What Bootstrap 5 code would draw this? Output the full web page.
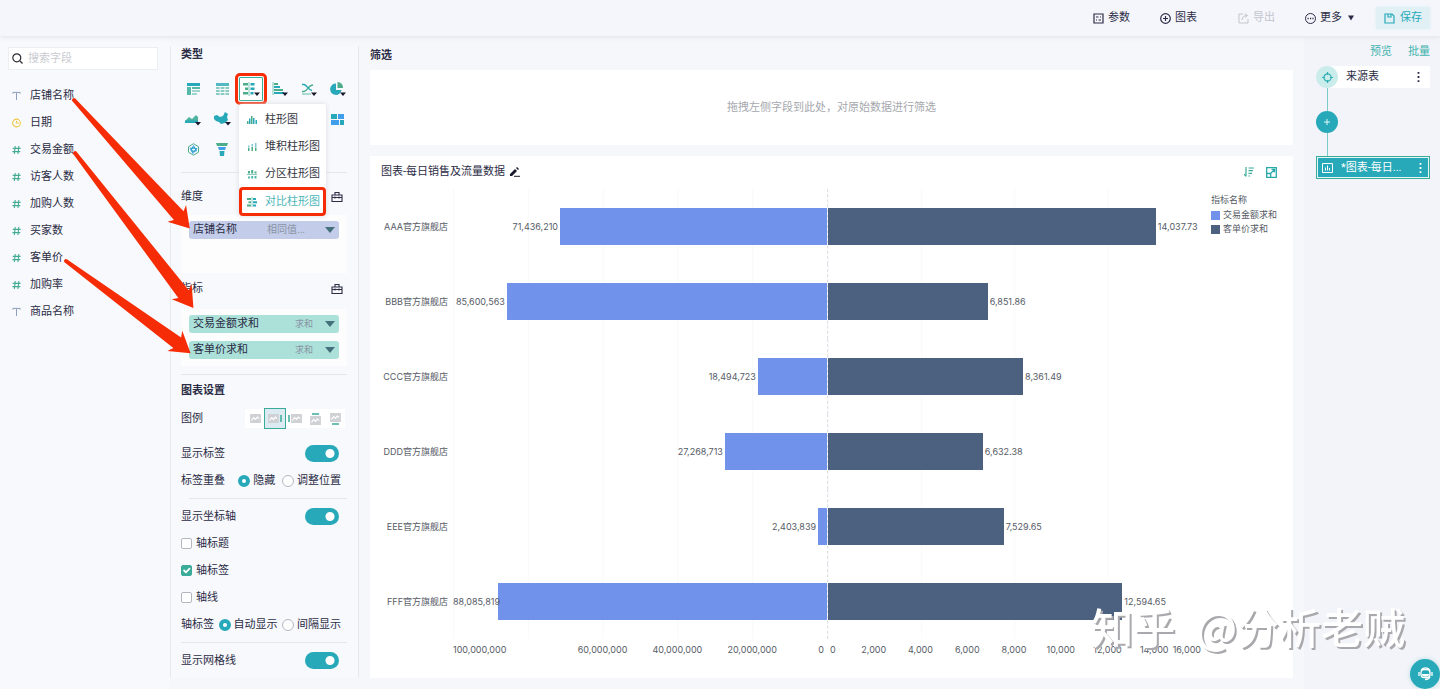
<!DOCTYPE html>
<html lang="zh-CN">
<head>
<meta charset="utf-8">
<meta name="viewport" content="width=device-width, initial-scale=1">
<title>图表-每日销售及流量数据</title>
<link href="https://cdn.jsdelivr.net/npm/bootstrap@5.3.0/dist/css/bootstrap.min.css" rel="stylesheet">
<style>
:root{--teal:#27a9b9;--green:#3bab9a;--ink:#2b2c45;--red:#f62c06}
body{font-family:Roboto,"Noto Sans CJK SC",sans-serif;font-size:11px;line-height:16px;color:var(--ink);background:#f6f7fa;overflow-x:hidden}
svg{display:block;flex:none}
button{font-size:11px;line-height:16px;color:inherit;background:none;border:0;padding:0}
a{text-decoration:none}
.topbar{height:36px;background:#f5f6fc;box-shadow:0 1px 5px #dfe1e8;padding-right:10px;position:relative}
.tool{display:flex;align-items:center;gap:4px}
.save{background:#e0f0f5;color:var(--teal);padding:3px 8px;gap:5px;box-shadow:0 0 4px #e0f0f5;margin-left:22px}
.fields{width:170px;padding:11px 12px 0 8px;background:#f7f9fc}
.searchbox{background:#fff;border:1px solid #eceef2;height:23px;padding:0 3px;gap:5px}
.searchbox input{font-size:11px;border:0;outline:0;background:none;min-width:0;padding:0}
.searchbox input::placeholder{color:#c9cbd1}
.field-item{height:27px;gap:9px;padding-left:4px}
.config{width:189px;padding:1px 11px 3px 10px;border:solid #e6e8ee;border-width:0 1px;background:#f7f9fc;margin:10px 0 12px}
.rowline{display:flex;align-items:center;justify-content:space-between}
.types{display:grid;grid-template-columns:repeat(6,1fr);position:relative;row-gap:6px;padding:6px 0 11px;margin-right:-5px;margin-left:-2px}
.types>button{height:24px;display:flex;align-items:center;justify-content:center;position:relative}
.types>button.picked{border:1px solid var(--green);background:#fff;width:24px;justify-self:center;outline:3px solid var(--red);outline-offset:1px;border-radius:1px}
.chart-menu{display:block;position:absolute;left:60px;top:33px;width:87px;min-width:0;padding:2px 0 0;font-size:11px;border:0;border-radius:2px;background:#fff;box-shadow:0 0 5px #d9dce4;z-index:3}
.chart-menu .dropdown-item{display:flex;align-items:center;gap:8px;height:27px;padding:0 6px 0 8px;color:#34363f;line-height:16px}
.chart-menu .dropdown-item.chosen{color:#4eb6b8;border:3px solid var(--red);border-radius:4px;height:29px;padding:0 3px 0 5px}
.dropzone{background:#fdfdfe;padding:6px 8px 7px;gap:8px}
.pill{height:18px;display:flex;align-items:center;padding:0 4px 0 4px;background:#abe1d9;border-radius:3px;width:150px}
.pill.dim{background:#c3cdea}
.pill small{font-size:9px;color:#8a93a5;margin-right:12px}
.pill.dim small{font-size:10px;margin-right:20px}
.tri{border:solid transparent;border-width:6px 5px 0;border-top-color:#44707b}
.rule{height:1px;background:#e4e6ec}
.legendpick{background:#fff;margin-right:2px}
.legendpick button{width:20px;height:19px;display:flex;align-items:center;justify-content:center}
.legendpick button.on{outline:1px solid var(--green);background:#dcebf2}
.form-check-input{width:12px;height:12px;margin:0;flex:none;background-size:12px;border-color:#b4b7c0}
.form-check-input[type=checkbox]{width:11px;height:11px;border-radius:2px}
.form-check-input[type=checkbox]:checked{background-color:var(--green);border-color:var(--green)}
.form-check-input[type=radio]:checked{background:#fff;border:4px solid var(--teal)}
.form-check-input.flip[type=checkbox]{width:34px;height:17px;border-radius:9px;background:var(--teal) radial-gradient(circle 5px at 25px 50%,#fff 4px,transparent 5px);border:0;margin-right:2px}
.opt{display:flex;align-items:center;gap:4px}
.rowline .opt{gap:3px}
.cfg{height:27px;padding-right:6px}
.filterbox{height:75px;color:#a6a8ae;background:#fff;margin:6px 0 11px}
.chartcard{background:#fff;padding:8px 16px 22px 11px}
.plotgrid{display:grid;grid-template-columns:72px 1fr 1fr 76px;padding-top:9px;font-family:Inter,"Noto Sans CJK SC",sans-serif;font-size:9px;line-height:12px;color:#565b66}
.plotrow{height:75px}
.plotrow.cat{display:flex;align-items:center;justify-content:flex-end;padding-right:5px;white-space:nowrap}
.side{display:flex;align-items:center;gap:2px;white-space:nowrap;background-image:linear-gradient(90deg,#f8f9fb 1px,transparent 1px)}
.side.neg{justify-content:flex-end;background-size:20% 100%}
.side.pos{background-size:25% 100%;border-left:1px dashed #dfe1e6}
.bar{height:37px;flex:none;background:#7092ea}
.pos .bar{background:#4c6080}
.side span{position:relative;z-index:1;min-width:0}
.axis{display:flex;padding-top:5px}
.axis span{display:flex;justify-content:center;flex:none;white-space:nowrap}
.legend9{font-size:9px;line-height:14px;padding:4px 0 0 10px;white-space:nowrap}
.sw{width:9px;height:9px;flex:none;background:#7092ea}
.flow{width:136px;padding:8px 10px 0 12px;background:#f3f4f9}
.flow a{color:#42b3ae}
.source{background:#fff;height:22px;margin-left:12px;padding:0 6px 0 18px;position:relative}
.dot22{width:22px;height:22px;border-radius:50%;display:flex;align-items:center;justify-content:center;flex:none}
.source .dot22{position:absolute;left:-12px;top:0;background:#caeceb}
.wire{width:1px;height:23px;background:#7ccbc8;margin-left:11px}
.current{width:100%;height:23px;background:var(--teal);border:1px solid var(--green);box-shadow:inset 0 0 0 1px #e5f6f7;color:#fff;padding:0 7px 0 5px;gap:8px}
.chatball{position:fixed;right:0;bottom:0;width:30px;height:30px;border-radius:50%;background:var(--teal);box-shadow:0 0 5px #b9dde3;display:flex;align-items:center;justify-content:center}
.arrows{position:absolute;left:0;top:0;pointer-events:none;z-index:5}
.sign{position:absolute;right:35px;top:596px;font:500 42px/60px "Noto Sans CJK SC",sans-serif;color:#fff;text-shadow:2px 2px 0 #a9a9ad;white-space:pre;pointer-events:none;z-index:4}
</style>
</head>
<body>
<!-- shared icons -->
<svg width="0" height="0" class="position-absolute">
<defs>
<symbol id="i-t" viewBox="0 0 10 10"><path d="M1 2.500V1h8v1.500M5 1v8.500" fill="none" stroke="#8f9cba" stroke-width="1.100"/></symbol>
<symbol id="i-n" viewBox="0 0 10 10"><path d="M3.600.5 2.600 9.500M7.600.5l-1 9M.8 3.200h8.700M.5 6.800h8.700" fill="none" stroke="#43ab93" stroke-width="1.200"/></symbol>
<symbol id="i-box" viewBox="0 0 12 12"><path d="M1 4h10v6.500H1zM4 4V1.500h4V4M1 6.500h10M4 5.500v2M8 5.500v2" fill="none" stroke="#2b2c45" stroke-width="1.100"/></symbol>
<symbol id="i-pic" viewBox="0 0 12 10"><path d="M0 0h12v10H0z" fill="#cfd1d4"/><path d="m1.500 7 2.500-3 2 2 2-2.500 2 1.500" fill="none" stroke="#fff" stroke-width="1.300"/></symbol>
<symbol id="i-more" viewBox="0 0 3 11"><path d="M0.500 0h2v2h-2zM.5 4.500h2v2h-2zM.5 9h2v2h-2z" fill="currentColor"/></symbol>
</defs>
</svg>

<header class="topbar d-flex justify-content-end align-items-center">
<button class="tool"><svg width="11" height="11" viewBox="0 0 11 11" fill="none" stroke="currentColor" stroke-width="1.200"><path d="M1 1h9v9H1zM3 4h2.500M7 4h1M3 7h1M5.500 7H8"/></svg>参数</button>
<button class="tool" style="margin-left:30px"><svg width="11" height="11" viewBox="0 0 11 11" fill="none" stroke="currentColor" stroke-width="1.200"><circle cx="5.500" cy="5.500" r="4.800"/><path d="M5.500 3v5M3 5.500h5"/></svg>图表</button>
<button class="tool" style="color:#c3c5cc;margin:0 30px 0 41px" disabled><svg width="11" height="11" viewBox="0 0 11 11" fill="none" stroke="currentColor"><path d="M5 1H1v9h9V6M4 7c0-3 2-4.500 5-4.500M7 .5l2.500 2L7 4.500"/></svg>导出</button>
<button class="tool"><svg width="11" height="11" viewBox="0 0 11 11" fill="none" stroke="currentColor"><circle cx="5.500" cy="5.500" r="5"/><path d="M2.500 5.500h1.200M5 5.500h1.200M7.400 5.500h1.200" stroke-width="1.300"/></svg>更多<svg width="6" height="6" viewBox="0 0 6 6" style="margin-left:2px"><path d="M0 .5h6L3 5.500z" fill="currentColor"/></svg></button>
<button class="tool save"><svg width="11" height="11" viewBox="0 0 11 11" fill="none" stroke="currentColor" stroke-width="1.200"><path d="M1 1h7l2 2v7H1zM4 1v3h3V1"/></svg>保存</button>
</header>

<main class="d-flex">
<aside class="fields flex-shrink-0">
<div class="searchbox d-flex align-items-center">
<svg width="11" height="11" viewBox="0 0 11 11" fill="none" stroke="#2b2c35" stroke-width="1.200"><circle cx="4.800" cy="4.800" r="4"/><path d="m8 8 2.500 2.500"/></svg>
<input class="flex-fill" type="text" placeholder="搜索字段" aria-label="搜索字段">
</div>
<ul class="list-unstyled m-0" style="padding-top:12px">
<li class="field-item d-flex align-items-center"><svg width="9" height="10"><use href="#i-t"/></svg>店铺名称</li>
<li class="field-item d-flex align-items-center"><svg width="9" height="10" viewBox="0 0 10 10" fill="none" stroke="#efc744" stroke-width="1.200"><circle cx="5" cy="5" r="4.300"/><path d="M5 2.500V5h2.500"/></svg>日期</li>
<li class="field-item d-flex align-items-center"><svg width="9" height="10"><use href="#i-n"/></svg>交易金额</li>
<li class="field-item d-flex align-items-center"><svg width="9" height="10"><use href="#i-n"/></svg>访客人数</li>
<li class="field-item d-flex align-items-center"><svg width="9" height="10"><use href="#i-n"/></svg>加购人数</li>
<li class="field-item d-flex align-items-center"><svg width="9" height="10"><use href="#i-n"/></svg>买家数</li>
<li class="field-item d-flex align-items-center"><svg width="9" height="10"><use href="#i-n"/></svg>客单价</li>
<li class="field-item d-flex align-items-center"><svg width="9" height="10"><use href="#i-n"/></svg>加购率</li>
<li class="field-item d-flex align-items-center"><svg width="9" height="10"><use href="#i-t"/></svg>商品名称</li>
</ul>
</aside>

<section class="config flex-shrink-0">
<div class="fw-bold">类型</div>
<div class="types mt-2">
<button aria-label="明细表"><svg width="13" height="12" viewBox="0 0 13 12"><path d="M0 0h13v3H0z" fill="#27a9b9"/><path d="M0 4h4v8H0zM5 4h8v2H5z" fill="#55b9a8"/><path d="M5 7h8v2H5zM5 10h5v2H5z" fill="#9fd5cf"/></svg></button>
<button aria-label="表格"><svg width="13" height="12" viewBox="0 0 13 12"><path d="M0 0h13v3H0z" fill="#55b9c4"/><path d="M0 4h3.700v2H0zM4.700 4h3.700v2H4.700zM9.400 4H13v2H9.400zM0 7h3.700v2H0zM4.700 7h3.700v2H4.700zM9.400 7H13v2H9.400zM0 10h3.700v2H0zM4.700 10h3.700v2H4.700zM9.400 10H13v2H9.400z" fill="#8accc2"/></svg></button>
<button class="picked" aria-label="柱形图"><svg width="17" height="15" viewBox="0 0 17 15"><path d="M0 1h5v2.500H0zM2 5.500h3V8H2zM0 10h5v2.500H0z" fill="#4dad8a"/><path d="M7.500 1h4v2.500h-4zM7.500 5.500h4V8h-4zM7.500 10h3v2.500h-3z" fill="#27a9b9"/><path d="M6 0v14" stroke="#7bc8b9"/><path d="M11 10.500h6L14 14z" fill="#17182c"/></svg></button>
<button aria-label="条形图"><svg width="16" height="15" viewBox="0 0 16 15"><path d="M1 0v13" stroke="#7bc8b9"/><path d="M2 1h4v2H2zM2 7h9v2H2z" fill="#4dad8a"/><path d="M2 4h6v2H2zM2 10h10v2H2z" fill="#27a9b9"/><path d="M10 10.500h6L13 14z" fill="#17182c"/></svg></button>
<button aria-label="折线图"><svg width="16" height="15" viewBox="0 0 16 15" fill="none" stroke-width="1.400"><path d="M1 9.500h2C7 9 7 3 12 3" stroke="#4dad8a"/><path d="M1 2.500h2C6 3 7 8 11 8.500" stroke="#27a9b9"/><path d="M1 12h9" stroke="#8accc2"/><path d="M10 10.500h6L13 14z" fill="#17182c"/></svg></button>
<button aria-label="饼图"><svg width="16" height="15" viewBox="0 0 16 15"><path d="M6 1.500A5.700 5.700 0 1 0 11.500 8H6z" fill="#27a9b9"/><path d="M7.500 0A5.500 5.500 0 0 1 13 6H7.500z" fill="#4dad8a"/><path d="M10 10.500h6L13 14z" fill="#17182c"/></svg></button>
<button aria-label="面积图"><svg width="16" height="13" viewBox="0 0 16 13"><path d="M0 8 4 4l3 2 4-4 2 2v5H0z" fill="#4fb39f"/><path d="M0 7.500h13V10H0z" fill="#27a9b9"/><path d="M10 9h6l-3 3.500z" fill="#17182c"/></svg></button>
<button aria-label="地图"><svg width="17" height="14" viewBox="0 0 17 14"><path d="m0 4 3-1 3 2 3-1 2-4 3 2-1 3 1 3-3 3-4 1-2-2-3-1-2-2z" fill="#27a9b9"/><path d="M11 10h6l-3 3.500z" fill="#17182c"/></svg></button>
<span></span><span></span><span></span>
<button aria-label="矩形树图"><svg width="13" height="11" viewBox="0 0 13 11"><path d="M0 0h6v5H0zM9 6h4v5H9z" fill="#27a9b9"/><path d="M7 0h6v5H7zM0 6h8v5H0z" fill="#3f9fea"/></svg></button>
<button aria-label="雷达图"><svg width="13" height="13" viewBox="0 0 13 13" fill="none"><path d="m6.500.7 5 3v5.500l-5 3-5-3V3.700z" stroke="#4dad8a"/><path d="m6.500 2.500 3 5.500H4zM3 5l7 .5-4 5z" stroke="#3f9fea"/><circle cx="6.500" cy="6.500" r="2" stroke="#27a9b9"/></svg></button>
<button aria-label="漏斗图"><svg width="12" height="13" viewBox="0 0 12 13"><path d="M0 0h12l-1 3H1z" fill="#4dad8a"/><path d="M2 4h8L9 7H3z" fill="#3f9fea"/><path d="M3.500 8h5l-.5 5H4z" fill="#27a9b9"/></svg></button>
<div class="chart-menu dropdown-menu show">
<button class="dropdown-item"><svg width="10" height="10" viewBox="0 0 10 10"><path d="M0 6h1.500v3H0zM4 1h1.500v8H4z" fill="#4dad8a"/><path d="M2 3.500h1.500V9H2zM6 3h1.500v6H6zM8.500 5H10v4H8.500z" fill="#27a9b9"/></svg>柱形图</button>
<button class="dropdown-item"><svg width="10" height="10" viewBox="0 0 10 10"><path d="M1 6h1.500v3H1zM4.500 5H6v4H4.500zM8 5.500h1.500V9H8z" fill="#4dad8a"/><path d="M1 3.500h1.500v2H1zM4.500 2H6v2.500H4.500zM8 1h1.500v4H8z" fill="#7cc7d2"/></svg>堆积柱形图</button>
<button class="dropdown-item"><svg width="10" height="10" viewBox="0 0 10 10"><path d="M1 2h2v2.500H1zM4.200 1h2v3.500h-2zM7.500 2.500h2v2h-2z" fill="#4dad8a"/><path d="M1 7.500h2v2H1zM4.200 7h2v2.500h-2zM7.500 7h2v2.500h-2z" fill="#54b6a8"/><path d="M0 5.500h10" stroke="#8accc2"/></svg>分区柱形图</button>
<button class="dropdown-item chosen"><svg width="10" height="10" viewBox="0 0 10 10"><path d="M0 1h4v2H0zM1.500 4.200h2.500v2H1.500zM0 7.400h4v2H0z" fill="#4dad8a"/><path d="M6 1h3v2H6zM6 4.200h4v2H6zM6 7.400h3v2H6z" fill="#27a9b9"/><path d="M5 0v10" stroke="#8accc2"/></svg>对比柱形图</button>
</div>
</div>
<div class="rule"></div>
<div class="rowline mt-3 pe-1"><span>维度</span><svg width="12" height="12"><use href="#i-box"/></svg></div>
<div class="dropzone d-flex flex-column" style="min-height:58px;margin-top:10px">
<div class="pill dim"><span class="flex-fill">店铺名称</span><small>相同值...</small><i class="tri"></i></div>
</div>
<div class="rowline mt-2 pe-1"><span>指标</span><svg width="12" height="12"><use href="#i-box"/></svg></div>
<div class="dropzone d-flex flex-column" style="margin-top:12px">
<div class="pill"><span class="flex-fill">交易金额求和</span><small>求和</small><i class="tri"></i></div>
<div class="pill"><span class="flex-fill">客单价求和</span><small>求和</small><i class="tri"></i></div>
</div>
<div class="rule mt-2"></div>
<div class="fw-bold mt-2">图表设置</div>
<div class="rowline" style="margin-top:10px"><span>图例</span>
<div class="legendpick d-flex">
<button aria-label="无图例"><svg width="11" height="9"><use href="#i-pic"/></svg></button>
<button class="on" aria-label="右侧"><svg width="11" height="9"><use href="#i-pic"/></svg><svg width="3" height="9"><path d="M2 1v7" stroke="#3bab9a" stroke-width="1.500"/></svg></button>
<button aria-label="左侧"><svg width="3" height="9"><path d="M1 1v7" stroke="#3bab9a" stroke-width="1.500"/></svg><svg width="11" height="9"><use href="#i-pic"/></svg></button>
<button class="flex-column" aria-label="上方"><svg width="9" height="3"><path d="M1 1h7" stroke="#3bab9a" stroke-width="1.500"/></svg><svg width="11" height="9"><use href="#i-pic"/></svg></button>
<button class="flex-column" aria-label="下方"><svg width="11" height="9"><use href="#i-pic"/></svg><svg width="9" height="3"><path d="M1 2h7" stroke="#3bab9a" stroke-width="1.500"/></svg></button>
</div></div>
<div class="rowline cfg" style="margin-top:12px"><label for="s1">显示标签</label><input id="s1" class="form-check-input flip" type="checkbox" role="switch" checked></div>
<div class="rowline cfg"><span>标签重叠</span><span></span><label class="opt"><input class="form-check-input" type="radio" name="ov" checked>隐藏</label><label class="opt"><input class="form-check-input" type="radio" name="ov">调整位置</label></div>
<div class="rule mt-1 ms-2"></div>
<div class="rowline cfg mt-1"><label for="s2">显示坐标轴</label><input id="s2" class="form-check-input flip" type="checkbox" role="switch" checked></div>
<label class="opt cfg"><input class="form-check-input" type="checkbox">轴标题</label>
<label class="opt cfg"><input class="form-check-input" type="checkbox" checked>轴标签</label>
<label class="opt cfg"><input class="form-check-input" type="checkbox">轴线</label>
<div class="rowline cfg"><span>轴标签</span><label class="opt"><input class="form-check-input" type="radio" name="ax" checked>自动显示</label><label class="opt"><input class="form-check-input" type="radio" name="ax">间隔显示</label></div>
<div class="rule mt-1"></div>
<div class="rowline cfg mt-1"><label for="s3">显示网格线</label><input id="s3" class="form-check-input flip" type="checkbox" role="switch" checked></div>
</section>

<section class="flex-fill" style="min-width:0;padding:12px 11px 8px 11px">
<div class="fw-bold">筛选</div>
<div class="filterbox d-flex align-items-center justify-content-center">拖拽左侧字段到此处，对原始数据进行筛选</div>
<div class="chartcard">
<div class="d-flex align-items-center">
<span>图表-每日销售及流量数据</span>
<button class="ms-1" aria-label="编辑"><svg width="11" height="10" viewBox="0 0 11 10"><path d="m1 7 5-5 2 2-5 5H1zM7 1l1-1 2 2-1 1z" fill="#17182c"/><path d="M5 9.300h6" stroke="#17182c"/></svg></button>
<button class="ms-auto" aria-label="排序"><svg width="10" height="10" viewBox="0 0 10 10" fill="none" stroke="#3bab9a" stroke-width="1.200"><path d="M2 0v9M0 7l2 2.500M4.500 1H10M4.500 3.700H9M4.500 6.300H8M4.500 9H6"/></svg></button>
<button style="margin-left:12px" aria-label="放大"><svg width="11" height="11" viewBox="0 0 11 11" fill="none" stroke="#27a9a9" stroke-width="1.300"><path d="M.7.7h9.600v9.600H.7zM.7 6.500h4v4M5 6l3.500-3.500M5.500 2.300h3v3"/></svg></button>
</div>
<div class="plotgrid">
<div class="legend9" style="grid-column:4;grid-row:1 / span 3">指标名称
<div class="d-flex align-items-center" style="gap:3px;padding-top:1px"><i class="sw"></i>交易金额求和</div>
<div class="d-flex align-items-center" style="gap:3px"><i class="sw" style="background:#4c6080"></i>客单价求和</div>
</div>
<div class="plotrow cat" style="grid-column:1">AAA官方旗舰店</div><div class="side neg"><span>71,436,210</span><div class="bar" style="width:71.4%"></div></div><div class="side pos"><div class="bar" style="width:87.9%"></div><span>14,037.73</span></div>
<div class="plotrow cat" style="grid-column:1">BBB官方旗舰店</div><div class="side neg"><span>85,600,563</span><div class="bar" style="width:85.6%"></div></div><div class="side pos"><div class="bar" style="width:42.8%"></div><span>6,851.86</span></div>
<div class="plotrow cat" style="grid-column:1">CCC官方旗舰店</div><div class="side neg"><span>18,494,723</span><div class="bar" style="width:18.5%"></div></div><div class="side pos"><div class="bar" style="width:52.3%"></div><span>8,361.49</span></div>
<div class="plotrow cat" style="grid-column:1">DDD官方旗舰店</div><div class="side neg"><span>27,268,713</span><div class="bar" style="width:27.3%"></div></div><div class="side pos"><div class="bar" style="width:41.5%"></div><span>6,632.38</span></div>
<div class="plotrow cat" style="grid-column:1">EEE官方旗舰店</div><div class="side neg"><span>2,403,839</span><div class="bar" style="width:2.4%"></div></div><div class="side pos"><div class="bar" style="width:47.1%"></div><span>7,529.65</span></div>
<div class="plotrow cat" style="grid-column:1">FFF官方旗舰店</div><div class="side neg"><span>88,085,819</span><div class="bar" style="width:88.1%"></div></div><div class="side pos"><div class="bar" style="width:78.9%"></div><span>12,594.65</span></div>
<div class="axis" style="grid-column:2"><span class="justify-content-start" style="width:30%">100,000,000</span><span style="width:20%">60,000,000</span><span style="width:20%">40,000,000</span><span style="width:20%">20,000,000</span><span class="justify-content-end" style="width:10%;padding-right:3px">0</span></div>
<div class="axis"><span class="justify-content-start" style="width:6.25%;padding-left:3px">0</span><span style="width:12.5%">2,000</span><span style="width:12.5%">4,000</span><span style="width:12.5%">6,000</span><span style="width:12.5%">8,000</span><span style="width:12.5%">10,000</span><span style="width:12.5%">12,000</span><span style="width:12.5%">14,000</span><span class="justify-content-end" style="width:6.25%">16,000</span></div>
</div>
</div>
</section>

<aside class="flow flex-shrink-0">
<div class="d-flex justify-content-end gap-3" style="padding-bottom:6px"><a href="#">预览</a><a href="#">批量</a></div>
<div class="source d-flex align-items-center justify-content-between"><span class="dot22"><svg width="11" height="11" viewBox="0 0 11 11" fill="none" stroke="#35b1b6" stroke-width="1.200"><circle cx="5.500" cy="5.500" r="3.600"/><path d="M5.500 0v3M5.500 8v3M0 5.500h3M8 5.500h3"/></svg></span>来源表<button aria-label="更多操作"><svg class="me-1" width="3" height="10"><use href="#i-more"/></svg></button></div>
<div class="wire"></div>
<button class="dot22" style="background:#27a9b9" aria-label="添加"><svg width="8" height="8" viewBox="0 0 8 8"><path d="M4 1v6M1 4h6" stroke="#e3f7f7"/></svg></button>
<div class="wire"></div>
<button class="current d-flex align-items-center"><svg width="11" height="10" viewBox="0 0 11 10" fill="none" stroke="#fff"><path d="M.5.5h10v9H.5zM3.500 7.500v-3M5.500 7.500v-5M7.500 7.500V5"/></svg><span class="flex-fill text-start">*图表-每日...</span><svg width="3" height="10"><use href="#i-more"/></svg></button>
</aside>
</main>

<svg class="arrows" width="200" height="370" fill="#f62c06">
<g transform="translate(74 100) rotate(48)"><circle r="2"/><path d="M0-2 156-7 153-13 173 0 153 12 156 6 0 2z"/></g>
<g transform="translate(75 153) rotate(52.600)"><circle r="2"/><path d="M0-2 178-7 175-13 195 0 175 12 178 6 0 2z"/></g>
<g transform="translate(66 261) rotate(36.500)"><circle r="2"/><path d="M0-2 138-7 135-13 155 0 135 12 138 6 0 2z"/></g>
</svg>
<div class="sign">知乎&ensp;@分析老贼</div>
<button class="chatball" aria-label="客服"><svg width="15" height="14" viewBox="0 0 15 14" fill="none" stroke="#fff" stroke-width="1.300"><rect x="3" y="2.500" width="9" height="8" rx="3"/><path d="M3 3.500C5 0 10 0 12 3.500M1 5v4M14 5v4M12 10c-1 2-3 2.500-5 2.500"/><path d="M4 7h7v1c-1 2-6 2-7 0z" fill="#fff" stroke="none"/></svg></button>
<script src="https://cdn.jsdelivr.net/npm/bootstrap@5.3.0/dist/js/bootstrap.bundle.min.js"></script>
</body>
</html>
